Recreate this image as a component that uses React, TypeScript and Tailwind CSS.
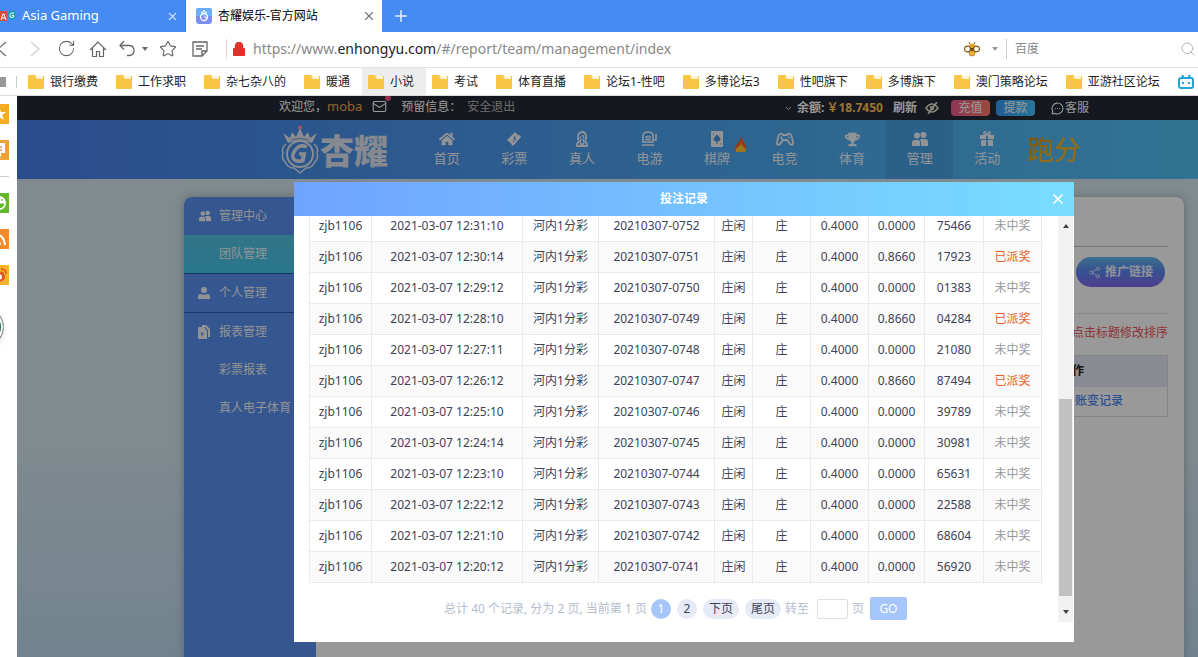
import React, { FC, ReactNode } from "react";
import {
	ChevronDown,
	Mail,
	MessageCircleMore,
	Plus,
	RotateCw,
	Search,
	Share2,
	Star,
	X,
} from "lucide-react";
import { FaHome, FaTrophy } from "react-icons/fa";

interface Bet {
	time: string;
	issue: string;
	bonus: string;
	result: string;
	won: boolean;
}

const bets: Bet[] = [
	{ time: "12:31:10", issue: "0752", bonus: "0.0000", result: "75466", won: false },
	{ time: "12:30:14", issue: "0751", bonus: "0.8660", result: "17923", won: true },
	{ time: "12:29:12", issue: "0750", bonus: "0.0000", result: "01383", won: false },
	{ time: "12:28:10", issue: "0749", bonus: "0.8660", result: "04284", won: true },
	{ time: "12:27:11", issue: "0748", bonus: "0.0000", result: "21080", won: false },
	{ time: "12:26:12", issue: "0747", bonus: "0.8660", result: "87494", won: true },
	{ time: "12:25:10", issue: "0746", bonus: "0.0000", result: "39789", won: false },
	{ time: "12:24:14", issue: "0745", bonus: "0.0000", result: "30981", won: false },
	{ time: "12:23:10", issue: "0744", bonus: "0.0000", result: "65631", won: false },
	{ time: "12:22:12", issue: "0743", bonus: "0.0000", result: "22588", won: false },
	{ time: "12:21:10", issue: "0742", bonus: "0.0000", result: "68604", won: false },
	{ time: "12:20:12", issue: "0741", bonus: "0.0000", result: "56920", won: false },
];

const bookmarks = [
	"银行缴费",
	"工作求职",
	"杂七杂八的",
	"暖通",
	"小说",
	"考试",
	"体育直播",
	"论坛1-性吧",
	"多博论坛3",
	"性吧旗下",
	"多博旗下",
	"澳门策略论坛",
	"亚游社区论坛",
];

const Caret: FC<{ className?: string }> = ({ className }) => (
	<svg viewBox="0 0 6 4" className={`h-1 w-1.5 ${className || ""}`}>
		<path d="M0 0h6L3 4z" fill="currentColor" />
	</svg>
);

const Folder = () => (
	<svg viewBox="0 0 16 14" className="h-3.5 w-4 shrink-0">
		<path d="M0 1Q0 0 1 0h6l2 1h7v12q0 1-1 1H1q-1 0-1-1z" fill="#f8c544" />
		<path d="M7 1h8v3H9z" fill="#fff4d2" />
	</svg>
);

/* ---------- browser chrome ---------- */

const TabBar = () => (
	<div className="flex h-8 shrink-0 items-center bg-[#468bf4]">
		<div className="flex h-full w-[186px] items-center border-r border-[#3b78dc] pr-1.5 text-[13px] text-white">
			<svg viewBox="0 0 16 16" className="h-4 w-4 shrink-0">
				<rect y="3" width="7" height="10" fill="#d9483b" />
				<circle cx="12" cy="7" r="4.5" fill="#1c9cb0" />
				<path d="M1 12l2-6h1l2 6M2 10h3" stroke="#fff" strokeWidth="1" fill="none" />
				<path d="M14 5.5q-3-2-4 1t2 3q2 0 2-2h-2" stroke="#fff" fill="none" />
			</svg>
			<span className="ml-1.5 flex-1">Asia Gaming</span>
			<button aria-label="关闭标签">
				<X size={13} strokeWidth={2} color="#cfe0ff" />
			</button>
		</div>
		<div className="flex h-full w-[196px] items-center bg-white px-2.5 pr-1.5 text-xs text-black">
			<svg viewBox="0 0 16 16" className="h-4 w-4 shrink-0">
				<rect width="16" height="16" rx="3" fill="#7c8df2" />
				<path d="M0 3q0-3 3-3h10q3 0 3 3v5H0z" fill="#68aef8" />
				<circle cx="8" cy="9" r="3.5" fill="none" stroke="#fff" strokeWidth="1.3" />
				<path d="M5 4l1.5 1L8 2l1.5 3L11 4M8 9h2v2" fill="none" stroke="#fff" />
			</svg>
			<span className="ml-1.5 flex-1">杏耀娱乐-官方网站</span>
			<button aria-label="关闭标签">
				<X size={14} strokeWidth={2} color="#777" />
			</button>
		</div>
		<button aria-label="新标签" className="ml-2.5">
			<Plus size={18} color="#e6f0ff" strokeWidth={2} />
		</button>
	</div>
);

const ToolButton: FC<{ label: string; children: ReactNode }> = ({ label, children }) => (
	<button aria-label={label} className="flex w-8 shrink-0 justify-center">
		{children}
	</button>
);

const Toolbar = () => (
	<div className="flex h-9 shrink-0 items-center overflow-hidden border-b border-[#e2e2e2] bg-white pb-0.5 text-[#666]">
		<div className="-ml-3.5 flex shrink-0 items-center">
			<ToolButton label="后退">
				<svg viewBox="0 0 18 18" className="h-[18px] w-[18px]">
					<path d="M13 2L5 9l8 7" fill="none" stroke="currentColor" strokeWidth="1.2" />
				</svg>
			</ToolButton>
			<ToolButton label="前进">
				<svg viewBox="0 0 18 18" className="h-[18px] w-[18px]">
					<path d="M6 2l8 7-8 7" fill="none" stroke="#ccc" strokeWidth="1.2" />
				</svg>
			</ToolButton>
			<ToolButton label="刷新页面">
				<RotateCw size={19} strokeWidth={1.3} />
			</ToolButton>
			<ToolButton label="主页">
				<svg viewBox="0 0 18 18" className="h-[18px] w-[18px]">
					<path d="M1 10L9 2l8 8M3.500 8v8.500h4v-5h3v5h4V8" fill="none" stroke="currentColor" strokeWidth="1.2" />
				</svg>
			</ToolButton>
			<button aria-label="撤销" className="flex w-[38px] shrink-0 items-center justify-center gap-1.5">
				<svg viewBox="0 0 18 18" className="h-[18px] w-[18px]">
					<path d="M6 1L2 5.500l4 4M2 5.500h9q5 0 5 5t-5 5H9" fill="none" stroke="currentColor" strokeWidth="1.3" />
				</svg>
				<Caret />
			</button>
			<ToolButton label="收藏">
				<Star size={18} strokeWidth={1.5} />
			</ToolButton>
			<ToolButton label="笔记">
				<svg viewBox="0 0 16 16" className="h-4 w-4">
					<path d="M1 1h14v9l-5 5H1zM15 10h-5v5M4 5h8M4 8h6" fill="none" stroke="currentColor" strokeWidth="1.3" />
				</svg>
			</ToolButton>
		</div>
		<div className="ml-2.5 h-5 w-px shrink-0 bg-[#f0cfcf]" />
		<svg viewBox="0 0 12 14" className="ml-1.5 h-3.5 w-3 shrink-0">
			<rect y="6" width="12" height="8" rx="1" fill="#df322c" />
			<path d="M2.500 7V4a3.500 3.500 0 017 0v3" fill="#df322c" stroke="#df322c" strokeWidth="1.5" />
		</svg>
		<div className="ml-2 flex-1 text-sm text-[#888]">
			https://www.<span className="text-[#222]">enhongyu.com</span>/#/report/team/management/index
		</div>
		<svg viewBox="0 0 16 16" className="h-4 w-4 shrink-0">
			<path d="M6 3L5 1M10 3l1-2" stroke="#8b5a14" />
			<ellipse cx="8" cy="5" rx="3" ry="2.500" fill="#e5a72a" />
			<ellipse cx="8" cy="12" rx="3" ry="3" fill="#f0b52f" stroke="#8b5a14" strokeWidth=".6" />
			<ellipse cx="3.500" cy="8" rx="3" ry="2.800" fill="#fff" stroke="#8b5a14" strokeWidth="1.2" />
			<ellipse cx="12.500" cy="8" rx="3" ry="2.800" fill="#fff" stroke="#8b5a14" strokeWidth="1.2" />
			<path d="M6 7h4l-2 4z" fill="#6b4410" />
		</svg>
		<Caret className="ml-3 shrink-0 text-[#999]" />
		<div className="mx-2 h-5 w-px shrink-0 bg-[#ccc]" />
		<input
			aria-label="搜索"
			placeholder="百度"
			className="w-[165px] min-w-0 text-xs placeholder:text-[#888] focus:outline-none"
		/>
		<Search size={16} strokeWidth={1.3} color="#aaa" className="mr-0.5 shrink-0" />
	</div>
);

const Bookmarks = () => (
	<div className="flex h-7 shrink-0 items-center overflow-hidden border-b border-[#dcdcdc] bg-white text-xs text-[#222]">
		<div className="h-2.5 w-1.5 shrink-0 bg-[#999]" />
		<div className="mr-[5px] ml-2.5 h-3 w-px shrink-0 bg-[#ccc]" />
		{bookmarks.map((name) => (
			<a
				key={name}
				href="#"
				className={`flex h-full shrink-0 items-center gap-1.5 pr-3 pl-1.5 whitespace-nowrap ${
					name === "小说" ? "bg-[#ededed]" : ""
				}`}
			>
				<Folder />
				{name}
			</a>
		))}
		<svg viewBox="0 0 16 16" className="ml-1.5 h-4 w-4 shrink-0" fill="none" stroke="#22a4d4" strokeWidth="2">
			<rect x="1" y="4" width="14" height="10" rx="2" />
			<path d="M4 1l2 3M12 1l-2 3M5 8v2M11 8v2" />
		</svg>
	</div>
);

const SideStrip = () => (
	<aside className="flex w-[17px] shrink-0 flex-col items-end gap-4 overflow-hidden bg-white pt-2 pr-2">
		<svg viewBox="0 0 20 20" className="h-5 w-5 shrink-0">
			<rect width="20" height="20" fill="#f4ad22" />
			<path d="M10 3l2 5h5l-4 3 2 5-5-3-5 3 2-5-4-3h5z" fill="#fff" />
		</svg>
		<svg viewBox="0 0 20 20" className="h-5 w-5 shrink-0">
			<rect width="20" height="20" fill="#f0a136" />
			<path d="M3 3h13v10h-4v4l-3-2H3z" fill="#fff" />
			<path d="M6 7h7M6 10h7" stroke="#f0a136" strokeWidth="1.500" />
		</svg>
		<div className="h-px w-5 shrink-0 bg-[#ccc]" />
		<svg viewBox="0 0 20 20" className="h-5 w-5 shrink-0">
			<rect width="20" height="20" fill="#65b72e" />
			<circle cx="10" cy="10" r="7" fill="#fff" />
			<path d="M6 11h9q-1 4-5 4t-4-4M13 6v2" fill="#65b72e" stroke="#65b72e" />
		</svg>
		<svg viewBox="0 0 20 20" className="h-5 w-5 shrink-0">
			<rect width="20" height="20" fill="#f08a2c" />
			<path d="M5 5q10 0 11 11M5 10q5 0 6 6" fill="none" stroke="#fff" strokeWidth="2" />
		</svg>
		<svg viewBox="0 0 20 20" className="h-5 w-5 shrink-0">
			<rect width="20" height="20" fill="#f7b32c" />
			<ellipse cx="9" cy="12" rx="7" ry="5" fill="#e0551d" />
			<ellipse cx="9" cy="12" rx="4" ry="3" fill="#fff" />
			<path d="M12 4q5 0 5 5M12 7q2 0 2 2" fill="none" stroke="#e0551d" strokeWidth="1.500" />
		</svg>
		<div className="mt-1.5 mr-[5px] h-10 w-10 shrink-0 rounded-full border border-[#999] bg-[#1d6a52] shadow-md ring-2 ring-white ring-inset" />
	</aside>
);

/* ---------- site ---------- */

const EyeIcon = () => (
	<svg viewBox="0 0 14 12" className="ml-2 h-3 w-3.5" fill="none" stroke="#e6e2cf" strokeWidth="1.600">
		<path d="M1 6q3-4 6-4t6 4q-3 4-6 4T1 6z" />
		<circle cx="7" cy="6" r="1.500" />
		<path d="M12 0L3 12" />
	</svg>
);

const TopBar = () => (
	<div className="h-6 bg-[#232832] text-xs text-white">
		<div className="mx-auto flex h-full w-[810px] items-center">
			<div className="flex flex-1 items-center pb-0.5">
				<span>欢迎您，</span>
				<span className="text-[13px] text-[#efab4c]">moba</span>
				<span className="relative ml-2.5">
					<Mail size={15} strokeWidth={1.8} />
					<i className="absolute -top-1 -right-1 h-1.5 w-1.5 rounded-full bg-[#ff4f86]" />
				</span>
				<span className="ml-3.5">预留信息：</span>
				<a href="#" className="ml-1.5 text-[#b8b8b8]">
					安全退出
				</a>
			</div>
			<ChevronDown size={9} className="mr-1" />
			<b>余额:</b>
			<b className="ml-0.5 text-[#ffc34d]">￥18.7450</b>
			<button className="ml-2.5 font-bold">刷新</button>
			<EyeIcon />
			<button className="ml-3 h-4 w-[39px] rounded-sm bg-linear-to-r from-[#f05c91] to-[#ff7b66] leading-4">
				充值
			</button>
			<button className="ml-1.5 h-4 w-[39px] rounded-sm bg-linear-to-r from-[#389cf8] to-[#45c3ff] leading-4">
				提款
			</button>
			<a href="#" className="ml-4 flex items-center gap-px">
				<MessageCircleMore size={13} />
				客服
			</a>
		</div>
	</div>
);

const Emblem = () => (
	<svg viewBox="0 0 40 50" className="h-[50px] w-10 shrink-0" fill="none" stroke="#e3e9f2">
		<path
			d="M8 18L3 8l7 5 2-6 4 5 4-9 4 9 4-5 2 6 7-5-5 10q-12-5-24 0z"
			fill="#e3e9f2"
			stroke="none"
		/>
		<path d="M11 15q9-3 18 0" stroke="#6d93d0" />
		<circle cx="20" cy="2.500" r="2" fill="#ff9a9a" stroke="none" />
		<path
			d="M6 19q-5 4-3 9-2 6 3 10 2 5 8 5l6 5 6-5q6 0 8-5 5-4 3-10 2-5-3-9"
			strokeWidth="1.500"
		/>
		<circle cx="20" cy="29" r="13" strokeWidth="2" />
		<path d="M27 22q-7-3-11 2t-3 9q2 4 9 3l2-7h-5" strokeWidth="3.500" />
		<path d="M25 28l-2 9" strokeWidth="2.500" />
	</svg>
);

const PersonIcon = () => (
	<svg viewBox="0 0 16 16" className="h-4 w-4" fill="none" stroke="currentColor" strokeWidth="1.800">
		<path d="M4 9V6q0-5 4-5t4 5v3" />
		<path d="M6 6q2 0 3-2l1 3q0 2-2 2T6 6z" strokeWidth="1" />
		<path d="M7 10q-4 0-4 5h10q0-5-4-5M6 12l2 2 2-2" />
	</svg>
);

const SlotIcon = () => (
	<svg viewBox="0 0 16 16" className="h-4 w-4" fill="none" stroke="currentColor" strokeWidth="1.600">
		<path d="M2 5q0-4 5-4t5 4v6H2zM1 14h12" />
		<path d="M4 6h6M4 8.500h6" />
		<path d="M15 3v6h-2" />
	</svg>
);

const CardIcon = () => (
	<svg viewBox="0 0 16 16" className="h-4 w-4">
		<rect x="2" width="12" height="16" rx="1" fill="currentColor" />
		<path d="M8 4q3 3 3 4.500T8 10Q5 10 5 8.500T8 4M8 9v4M4 3h1M11 13h1" fill="#4b92dc" stroke="#4b92dc" />
	</svg>
);

const TicketIcon = () => (
	<svg viewBox="0 0 16 16" className="h-4 w-4">
		<path d="M9 1l2 2q1 2 3 1l1 2-8 9-2-2q0-2-2-2l-2-2z" fill="currentColor" />
		<path d="M9 5l-1 3h2l-3 3" fill="none" stroke="#4b92dc" />
	</svg>
);

const GamepadIcon = () => (
	<svg viewBox="0 0 18 14" className="h-3.5 w-[18px]">
		<path
			d="M4 2q2-1 3 1h4q1-2 3-1 2 1 3 9 0 3-3 1l-3-4H7l-3 4q-3 2-3-1Q2 3 4 2z"
			fill="none"
			stroke="currentColor"
			strokeWidth="1.800"
		/>
		<path d="M4 6h3M5.500 4.500v3M12 5.500h2" stroke="currentColor" />
	</svg>
);

const GiftIcon = () => (
	<svg viewBox="0 0 16 16" className="h-4 w-4">
		<path d="M1 4h6v4H1zM9 4h6v4H9zM2 9h5v6H2zM9 9h5v6H9z" fill="currentColor" />
		<path d="M8 4Q4 4 5 1.500T8 4q2-5 3-2.500T8 4" fill="none" stroke="currentColor" strokeWidth="1.300" />
	</svg>
);

// two people, shared by the nav and the side menu
const TeamIcon: FC<{ className: string }> = ({ className }) => (
	<svg viewBox="0 0 18 16" className={className} fill="currentColor">
		<circle cx="6" cy="4.500" r="3" />
		<circle cx="12.500" cy="4" r="3" />
		<path d="M1 15v-3q0-3 3-3h3q2 0 2 3v3zM10 15v-3q0-2-1-4h5q3 0 3 3v4z" />
	</svg>
);

const Fire = () => (
	<svg viewBox="0 0 12 16" className="absolute top-4 right-1 h-4 w-3">
		<path d="M6 0q1 4 3 6t2 8l-1 2H1l-1-3q0-3 3-6t3-7" fill="#ff5a22" />
		<path d="M6 6q0 3 3 5t1 5H1q-1-3 2-5t3-5" fill="#ffc933" />
	</svg>
);

const navItems: { name: string; icon: ReactNode }[] = [
	{ name: "首页", icon: <FaHome size={16} /> },
	{ name: "彩票", icon: <TicketIcon /> },
	{ name: "真人", icon: <PersonIcon /> },
	{ name: "电游", icon: <SlotIcon /> },
	{ name: "棋牌", icon: <CardIcon /> },
	{ name: "电竞", icon: <GamepadIcon /> },
	{ name: "体育", icon: <FaTrophy size={15} /> },
	{ name: "管理", icon: <TeamIcon className="h-4 w-[18px]" /> },
	{ name: "活动", icon: <GiftIcon /> },
];

const NavBar = () => (
	<div className="bg-linear-to-r from-[#4780e8] to-[#55c8f7]">
		<div className="mx-auto flex h-[59px] w-[808px] items-center">
			<Emblem />
			<span className="w-[93px] font-['Noto_Sans_CJK_SC',sans-serif] text-[34px] leading-10 font-black text-[#dfe5ee]">
				杏耀
			</span>
			<nav className="grid h-full w-[608px] grid-cols-9">
				{navItems.map((item) => (
					<a
						key={item.name}
						href="#"
						className={`relative flex flex-col items-center pt-2.5 text-[13px] leading-5 text-[#f2f5fa] ${
							item.name === "管理" ? "bg-[#3b7fc0]/30" : ""
						}`}
					>
						<span className="flex h-[18px] items-center">{item.icon}</span>
						{item.name}
						{item.name === "棋牌" && <Fire />}
					</a>
				))}
			</nav>
			<a
				href="#"
				className="ml-1.5 bg-linear-to-br from-[#b5811c] via-[#f0b429] to-[#d9b44a] bg-clip-text text-[27px] leading-10 font-medium text-transparent"
			>
				跑分
			</a>
		</div>
	</div>
);

const SideItem: FC<{ name: string; icon?: ReactNode; active?: boolean; line?: boolean }> = ({
	name,
	icon,
	active,
	line,
}) => (
	<a
		href="#"
		className={`flex items-center pl-3.5 whitespace-nowrap ${
			active ? "bg-linear-to-b from-[#58c2e2] to-[#42c6e8]" : ""
		} ${line ? "h-[39px] border-b border-[#2855ac]" : "h-[38px]"}`}
	>
		<span className="w-[21px]">{icon}</span>
		{name}
	</a>
);

const Page = () => (
	<div className="mx-auto mt-[18px] flex h-[600px] w-[1000px] overflow-hidden rounded-t-lg bg-white text-xs shadow-[0_0_10px_rgba(0,0,0,0.25)]">
		<div className="w-[132px] shrink-0 bg-[#5990ee] text-[#f2f5fa]">
			<SideItem name="管理中心" icon={<TeamIcon className="h-3 w-3.5" />} />
			<SideItem name="团队管理" active line />
			<SideItem
				name="个人管理"
				icon={
					<svg viewBox="0 0 12 12" className="h-3 w-3" fill="currentColor">
						<circle cx="6" cy="3" r="3" />
						<path d="M0 12V10q0-3 3-3l3 1 3-1q3 0 3 3v2z" />
					</svg>
				}
				line
			/>
			<SideItem
				name="报表管理"
				icon={
					<svg viewBox="0 0 12 14" className="h-3.5 w-3">
						<path d="M4 0h4l4 4v8h-2V5L7 2H4z" fill="currentColor" />
						<path d="M1 2h5l3 4v8H1q-1 0-1-1V3q0-1 1-1z" fill="currentColor" />
						<path d="M4 7v4M3 9h3" stroke="#5990ee" />
					</svg>
				}
			/>
			<SideItem name="彩票报表" />
			<SideItem name="真人电子体育" />
		</div>
		<div className="flex-1 px-4">
			<div className="h-[50px] border-b border-[#c8c8c8]" />
			<div className="flex h-[67px] justify-end border-b border-[#e6e6e6] pt-2.5 pr-[3px]">
				<button className="flex h-[30px] items-center gap-1 rounded-full bg-linear-to-b from-[#62b6ec] via-[#5c86f2] to-[#8067ec] px-3 font-bold text-[#eef2ff]">
					<Share2 size={13} strokeWidth={1.5} />
					推广链接
				</button>
			</div>
			<p className="pt-2.5 pb-[13px] text-right leading-[18px] text-[#f0545c]">点击标题修改排序</p>
			<table className="ml-auto w-48 border-collapse border border-[#dcdcdc] text-center">
				<thead>
					<tr className="h-[31px] bg-[#e4e8f3] text-[#222]">
						<th className="font-bold">操作</th>
					</tr>
				</thead>
				<tbody>
					<tr className="h-[30px]">
						<td className="pr-11 text-right font-medium text-[#4a86f0]">
							<a href="#">账变记录</a>
						</td>
					</tr>
				</tbody>
			</table>
		</div>
	</div>
);

const BetTable = () => (
	<table className="-mt-1.5 w-[733px] table-fixed border-collapse text-center text-[#3d4354]">
		<colgroup>
			<col className="w-[62px]" />
			<col className="w-[151px]" />
			<col className="w-[76px]" />
			<col className="w-[116px]" />
			<col className="w-[38px]" />
			<col className="w-[58px]" />
			<col className="w-[58px]" />
			<col className="w-[56px]" />
			<col className="w-[59px]" />
			<col className="w-[58px]" />
		</colgroup>
		<tbody>
			{bets.map((bet) => (
				<tr
					key={bet.issue}
					className="h-[31px] even:bg-[#fafafa] [&>td]:border [&>td]:border-[#e9ebf0] [&>td]:p-0"
				>
					<td>zjb1106</td>
					<td>2021-03-07 {bet.time}</td>
					<td>河内1分彩</td>
					<td>20210307-{bet.issue}</td>
					<td>庄闲</td>
					<td>庄</td>
					<td>0.4000</td>
					<td>{bet.bonus}</td>
					<td>{bet.result}</td>
					<td className={bet.won ? "text-[#e4631f]" : "text-[#999]"}>
						{bet.won ? "已派奖" : "未中奖"}
					</td>
				</tr>
			))}
		</tbody>
	</table>
);

const Pagination = () => (
	<div className="mt-3.5 flex w-[733px] items-center justify-center text-[#b4bccd]">
		<span>总计 40 个记录, 分为 2 页, 当前第 1 页</span>
		<button className="ml-1 h-5 w-5 rounded-full bg-[#a6c5fb] text-white">1</button>
		<button className="ml-1.5 h-5 w-5 rounded-full bg-[#e6eaf6] text-[#3d4354]">2</button>
		<button className="ml-1.5 h-5 w-9 rounded-full bg-[#e6eaf6] text-[#3d4354]">下页</button>
		<button className="mr-1 ml-1.5 h-5 w-9 rounded-full bg-[#e6eaf6] text-[#3d4354]">尾页</button>
		<label htmlFor="jump">转至</label>
		<input
			id="jump"
			className="mr-1 ml-2 h-5 w-[31px] rounded-xs border border-[#dcdfe6] bg-white px-1"
		/>
		<span>页</span>
		<button className="ml-1.5 h-[23px] w-[37px] rounded-xs bg-[#a6c5fb] text-white">GO</button>
	</div>
);

const BetModal = () => (
	<div
		role="dialog"
		aria-label="投注记录"
		className="absolute top-[86px] left-1/2 flex h-[460px] w-[780px] -translate-x-1/2 flex-col bg-white text-xs"
	>
		<div className="relative flex h-[34px] shrink-0 items-center justify-center bg-linear-to-r from-[#70a3ff] to-[#79ddff] font-bold text-white">
			投注记录
			<button aria-label="关闭" className="absolute right-2">
				<X size={16} strokeWidth={2.5} />
			</button>
		</div>
		<div className="mb-5 flex min-h-0 flex-1 overflow-hidden pl-[15px]">
			<div className="flex-1">
				<BetTable />
				<Pagination />
			</div>
			<div className="mr-px flex w-[15px] flex-col items-center bg-[#f1f1f1] py-2 text-[#444]">
				<Caret className="rotate-180" />
				<div className="mt-[171px] mb-3.5 w-[13px] flex-1 bg-[#c1c1c1]" />
				<Caret />
			</div>
		</div>
	</div>
);

const App: FC = () => {
	return (
		<div className="flex h-screen flex-col overflow-hidden font-['Noto_Sans','Noto_Sans_CJK_SC',sans-serif]">
			<TabBar />
			<Toolbar />
			<Bookmarks />
			<div className="flex min-h-0 flex-1">
				<SideStrip />
				<main className="min-w-0 flex-1 overflow-hidden">
					<div className="relative h-full min-w-[1334px] overflow-hidden bg-linear-to-b from-[#d7e7ee] from-60% to-[#bedbee]">
						<TopBar />
						<NavBar />
						<Page />
						<div className="absolute inset-0 bg-black/40" />
						<BetModal />
					</div>
				</main>
			</div>
		</div>
	);
};

export default App;
